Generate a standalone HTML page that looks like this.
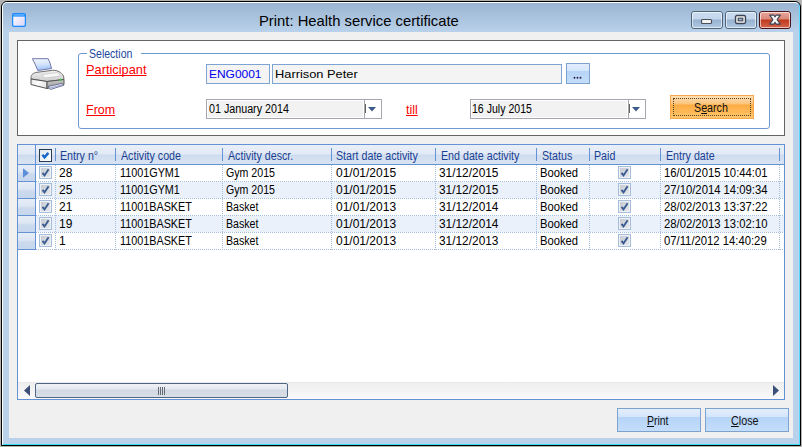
<!DOCTYPE html>
<html><head><meta charset="utf-8">
<style>
*{margin:0;padding:0;box-sizing:border-box}
html,body{width:802px;height:447px;overflow:hidden;background:#b2b2b2;font-family:"Liberation Sans",sans-serif}
.a{position:absolute}
.t{position:absolute;white-space:nowrap;line-height:14px}
#win{left:1px;top:1px;width:800px;height:445px;border:1px solid #000;border-radius:6px 6px 0 0;background:linear-gradient(#99b4d1 0px,#b9d1ea 30px,#b9d1ea);overflow:hidden}
#hl{left:0;top:0;width:798px;height:443px;border-top:1px solid #fff;border-left:1px solid #fff;border-right:1px solid #55dcff;border-bottom:1px solid #38def2;border-radius:5px 5px 0 0}
#client{left:9px;top:32px;width:784px;height:406px;background:#f0f0f0}
#title{left:259px;top:13px;font-size:14.8px;line-height:16px;color:#000}
.tb{top:11px;width:32px;height:18px;border:1px solid #4f6479;border-radius:3px;background:linear-gradient(#c8dbef 0,#c3d6ec 7px,#97b2d0 8px,#b3cbe5 17px)}
.tb::after{content:"";position:absolute;left:0;top:0;right:0;bottom:0;border:1px solid rgba(255,255,255,.6);border-radius:2px}
#tclose{background:linear-gradient(#e8a599 0,#d98a7a 7px,#c0391e 8px,#d56c52 17px);border-color:#4a1418}
#panel{left:17px;top:40px;width:768px;height:96px;border:1px solid #646464;background:#fff}
#grp{left:78px;top:53px;width:692px;height:76px;border:1px solid #6f99d3;border-radius:3px}
#grplbl{left:87px;top:46px;width:54px;height:12px;background:#fff}
.lnk{color:#f00;text-decoration:underline;text-decoration-skip-ink:none;font-size:12.5px}
u{text-decoration-skip-ink:none}
.tx{border:1px solid #7ea4d3;background:#f4f4f4}
.cb{border:1px solid #a6a6ae;background:#f2f2f2;box-shadow:inset 0 0 0 1px #fff}
.btn{border:1px solid #7da2ce;background:linear-gradient(#e4eefc 0,#d4e5fb 37%,#b6d4f8 38%,#c4ddfa 100%)}
#grid{left:17px;top:144px;width:768px;height:256px;border:1px solid #6592d4;background:#fff}
.hdr{background:linear-gradient(#e9eff8 0,#e2eaf6 9px,#cfdcef 10px,#d9e4f2 19px)}
.rh{background:linear-gradient(#e6edf7 0,#dde6f3 7px,#cbdaee 9px,#c6d6ed 16px)}
.dh{background-image:linear-gradient(90deg,#a3bde0 50%,transparent 50%);background-size:2px 1px}
.dv{background-image:linear-gradient(#a3bde0 50%,transparent 50%);background-size:1px 2px}
.ht{font-size:12px;color:#1b3f92;transform:scaleX(0.89);transform-origin:0 0}
.dt{font-size:11px;color:#000}
.hcb{width:13px;height:13px;border:1px solid #2b3b4f;background:linear-gradient(135deg,#dfe6ef,#fff)}
.hcb svg,.rcb svg{position:absolute;left:-1px;top:-1px}
.rcb{width:13px;height:13px;border:1px solid #a6bddc;background:linear-gradient(135deg,#c2c8d0,#e8ebef);box-shadow:inset 0 0 0 1px #eef2f7}
.sb{background:linear-gradient(#efefef,#f9f9f9);border-top:1px solid #e8e8e8}
.thumb{border:1px solid #4f6585;border-radius:2px;background:linear-gradient(#eef1f5 0,#e6eaf0 5px,#d2d9e2 6px,#d8dee6 13px)}

</style></head><body>
<div id="win" class="a">
  <div id="hl" class="a"></div>
</div>
<div id="client" class="a"></div>
<div id="title" class="t">Print: Health service certificate</div>
<svg class="a" style="left:12px;top:13px" width="14" height="14" viewBox="0 0 14 14">
<defs><linearGradient id="ig" x1="0" y1="0" x2="1" y2="1"><stop offset="0" stop-color="#ffffff"/><stop offset="1" stop-color="#d8d4f8"/></linearGradient></defs>
<rect x="0.6" y="0.6" width="12.8" height="12.8" rx="1.6" fill="url(#ig)" stroke="#1a8bff" stroke-width="1.25"/>
<rect x="1" y="1" width="12" height="2.6" fill="#1a8bff"/>
<rect x="1.6" y="1.5" width="10.8" height="0.9" fill="#9fd0ff"/>
</svg>
<div class="a tb" style="left:691px"></div>
<div class="a tb" style="left:725px"></div>
<div class="a tb" id="tclose" style="left:759px"></div>
<svg class="a" style="left:700px;top:18px" width="13" height="7" viewBox="0 0 13 7"><rect x="1.5" y="1.5" width="10" height="4" rx="1" fill="#f4f4f0" stroke="#4a505e" stroke-width="1.2"/></svg>
<svg class="a" style="left:734px;top:14px" width="13" height="11" viewBox="0 0 13 11"><rect x="1.5" y="1.5" width="10" height="8" rx="1.4" fill="#f4f4f0" stroke="#3f4658" stroke-width="1.4"/><rect x="4.2" y="4.2" width="4.6" height="2.6" fill="#9fb6d2" stroke="#3f4658" stroke-width="1.1"/></svg>
<svg class="a" style="left:768px;top:14px" width="14" height="12" viewBox="0 0 14 12"><path d="M1.7 1.1 L5.9 1.1 L7 2.9 L8.1 1.1 L12.3 1.1 L9.1 5.6 L12.3 10.1 L8.1 10.1 L7 8.3 L5.9 10.1 L1.7 10.1 L4.9 5.6 Z" fill="#f7f7f5" stroke="#3c4152" stroke-width="1.05" stroke-linejoin="round"/></svg>

<div id="panel" class="a"></div>
<svg class="a" style="left:29px;top:56px" width="38" height="36" viewBox="0 0 38 36">
<defs>
<linearGradient id="pg" x1="0" y1="0" x2="0.2" y2="1"><stop offset="0" stop-color="#f6f9ff"/><stop offset="0.6" stop-color="#d2e2fb"/><stop offset="1" stop-color="#9fc0f4"/></linearGradient>
<linearGradient id="bg1" x1="0" y1="0" x2="0" y2="1"><stop offset="0" stop-color="#f0f0f0"/><stop offset="1" stop-color="#cdcdcd"/></linearGradient>
<linearGradient id="bg2" x1="0" y1="0" x2="1" y2="0.3"><stop offset="0" stop-color="#e4e4e4"/><stop offset="0.5" stop-color="#fdfdfd"/><stop offset="1" stop-color="#e8e8e8"/></linearGradient>
<linearGradient id="bg3" x1="0" y1="0" x2="0" y2="1"><stop offset="0" stop-color="#c8c8c8"/><stop offset="1" stop-color="#9c9c9c"/></linearGradient>
</defs>
<path d="M3.4 2.7 L19.2 2.7 Q21.2 6.5 22.6 12.5 L8.8 14.5 Q6 7.5 3.4 2.7 Z" fill="url(#pg)" stroke="#6c72a8" stroke-width="0.95"/>
<path d="M2 21.5 C2 18.5 4.5 16.8 8 16.3 L23.5 14.3 C28.5 14 32.5 16.5 34.5 20 L35 23.5 L18 25.5 L2 23 Z" fill="url(#bg1)" stroke="#6e6e6e" stroke-width="1"/>
<path d="M13 18.5 L29 16.5 L31.5 20 L15.5 22 Z" fill="#f8f8f8" stroke="#c0c0c0" stroke-width="0.6"/>
<path d="M2 23 L18 25.5 L18 32.5 L2 28.5 Z" fill="url(#bg2)" stroke="#555" stroke-width="1"/>
<path d="M18 25.5 L35 23.5 L35 28.5 L18 32.5 Z" fill="url(#bg3)" stroke="#555" stroke-width="1"/>
<path d="M19 30.5 L33 27.3 L34.5 29.3 L21.5 33.5 Z" fill="#f2f3f8" stroke="#4f5676" stroke-width="0.8"/>
<path d="M20 32.3 L33.5 28.8" stroke="#8088c8" stroke-width="0.8"/>
<rect x="30.6" y="22.8" width="2" height="2" fill="#3fc83f"/>
</svg>
<div id="grp" class="a"></div>
<div id="grplbl" class="a"></div>
<div class="t" style="left:89px;top:46.6px;font-size:12.2px;color:#22479e;transform:scaleX(0.865);transform-origin:0 0">Selection</div>
<div class="t lnk" style="left:86px;top:63px;font-size:12.8px">Participant</div>
<div class="t lnk" style="left:86px;top:103px">From</div>
<div class="t lnk" style="left:406px;top:103px">till</div>

<div class="a tx" style="left:206px;top:64px;width:64px;height:20px"></div>
<div class="t" style="left:209px;top:67px;font-size:11.5px;color:#0000f0;transform:scaleX(1.04);transform-origin:0 0">ENG0001</div>
<div class="a tx" style="left:272px;top:64px;width:290px;height:20px"></div>
<div class="t" style="left:275px;top:67px;font-size:11.5px;color:#000;transform:scaleX(1.115);transform-origin:0 0">Harrison Peter</div>
<div class="a btn" style="left:566px;top:63px;width:24px;height:21px"></div>
<svg class="a" style="left:572px;top:75px" width="12" height="6"><circle cx="2.5" cy="2.7" r="0.95" fill="#2a1e40"/><circle cx="5.5" cy="2.7" r="0.95" fill="#2a1e40"/><circle cx="8.5" cy="2.7" r="0.95" fill="#2a1e40"/></svg>

<div class="a cb" style="left:206px;top:99px;width:176px;height:20px"></div>
<div class="a" style="left:363px;top:100px;width:18px;height:18px;background:#fff;border-left:1px solid #fff"><div class="a" style="left:0;top:0;width:1px;height:18px;background:#a6a6ae"></div></div>
<div class="a" style="left:365px;top:104px;width:1px;height:9px;background:#6a625c"></div>
<svg class="a" style="left:368px;top:107px" width="8" height="5" viewBox="0 0 8 5"><path d="M0 0 L8 0 L4 4.5Z" fill="#3c5a8a"/></svg>
<div class="t dt" style="left:209px;top:102px;font-size:12px;transform:scaleX(0.893);transform-origin:0 0">01 January 2014</div>

<div class="a cb" style="left:470px;top:99px;width:176px;height:20px"></div>
<div class="a" style="left:627px;top:100px;width:18px;height:18px;background:#fff;border-left:1px solid #fff"><div class="a" style="left:0;top:0;width:1px;height:18px;background:#a6a6ae"></div></div>
<div class="a" style="left:629px;top:104px;width:1px;height:9px;background:#6a625c"></div>
<svg class="a" style="left:632px;top:107px" width="8" height="5" viewBox="0 0 8 5"><path d="M0 0 L8 0 L4 4.5Z" fill="#3c5a8a"/></svg>
<div class="t dt" style="left:472px;top:102px;font-size:12px;transform:scaleX(0.88);transform-origin:0 0">16 July 2015</div>

<div class="a" style="left:670px;top:95px;width:84px;height:24px;border:1px solid #f6a94c;background:linear-gradient(#fde0b4 0,#fbc37c 8px,#fdab42 9px,#ffc66c 22px)"></div>
<div class="a" style="left:673px;top:98px;width:78px;height:18px;border:1px dotted #56462c"></div>
<div class="t" style="left:694px;top:101px;font-size:12px;color:#101010;transform:scaleX(0.89);transform-origin:0 0">S<u>e</u>arch</div>

<div id="grid" class="a"></div>

<div class="a btn" style="left:617px;top:408px;width:84px;height:24px"></div>
<div class="t" style="left:647px;top:414px;font-size:12px;color:#101010;transform:scaleX(0.87);transform-origin:0 0"><u>P</u>rint</div>
<div class="a btn" style="left:705px;top:408px;width:84px;height:24px"></div>
<div class="t" style="left:731px;top:414px;font-size:12px;color:#101010;transform:scaleX(0.9);transform-origin:0 0"><u>C</u>lose</div>

<div class="a hdr" style="left:18px;top:145px;width:766px;height:19px"></div>
<div class="a" style="left:18px;top:164px;width:766px;height:1px;background:#6592d4"></div>
<div class="a rh" style="left:18px;top:165px;width:17px;height:16px"></div>
<div class="a" style="left:18px;top:181px;width:18px;height:1px;background:#6592d4"></div>
<div class="a rh" style="left:18px;top:182px;width:17px;height:16px"></div>
<div class="a" style="left:18px;top:198px;width:18px;height:1px;background:#6592d4"></div>
<div class="a rh" style="left:18px;top:199px;width:17px;height:16px"></div>
<div class="a" style="left:18px;top:215px;width:18px;height:1px;background:#6592d4"></div>
<div class="a rh" style="left:18px;top:216px;width:17px;height:16px"></div>
<div class="a" style="left:18px;top:232px;width:18px;height:1px;background:#6592d4"></div>
<div class="a rh" style="left:18px;top:233px;width:17px;height:16px"></div>
<div class="a" style="left:18px;top:249px;width:18px;height:1px;background:#6592d4"></div>
<div class="a" style="left:35px;top:145px;width:1px;height:105px;background:#6592d4"></div>
<div class="a" style="left:36px;top:165px;width:748px;height:16px;background:#fff"></div>
<div class="a dh" style="left:36px;top:181px;width:748px;height:1px"></div>
<div class="a" style="left:36px;top:182px;width:748px;height:16px;background:#eaf1fb"></div>
<div class="a dh" style="left:36px;top:198px;width:748px;height:1px"></div>
<div class="a" style="left:36px;top:199px;width:748px;height:16px;background:#fff"></div>
<div class="a dh" style="left:36px;top:215px;width:748px;height:1px"></div>
<div class="a" style="left:36px;top:216px;width:748px;height:16px;background:#eaf1fb"></div>
<div class="a dh" style="left:36px;top:232px;width:748px;height:1px"></div>
<div class="a" style="left:36px;top:233px;width:748px;height:16px;background:#fff"></div>
<div class="a dh" style="left:36px;top:249px;width:748px;height:1px"></div>
<div class="a dv" style="left:55px;top:165px;width:1px;height:85px"></div>
<div class="a dv" style="left:115px;top:165px;width:1px;height:85px"></div>
<div class="a dv" style="left:222px;top:165px;width:1px;height:85px"></div>
<div class="a dv" style="left:331px;top:165px;width:1px;height:85px"></div>
<div class="a dv" style="left:435px;top:165px;width:1px;height:85px"></div>
<div class="a dv" style="left:536px;top:165px;width:1px;height:85px"></div>
<div class="a dv" style="left:589px;top:165px;width:1px;height:85px"></div>
<div class="a dv" style="left:660px;top:165px;width:1px;height:85px"></div>
<div class="a dv" style="left:779px;top:165px;width:1px;height:85px"></div>
<div class="a" style="left:55px;top:148px;width:1px;height:13px;background:#6592d4"></div>
<div class="a" style="left:115px;top:148px;width:1px;height:13px;background:#6592d4"></div>
<div class="a" style="left:222px;top:148px;width:1px;height:13px;background:#6592d4"></div>
<div class="a" style="left:331px;top:148px;width:1px;height:13px;background:#6592d4"></div>
<div class="a" style="left:435px;top:148px;width:1px;height:13px;background:#6592d4"></div>
<div class="a" style="left:536px;top:148px;width:1px;height:13px;background:#6592d4"></div>
<div class="a" style="left:589px;top:148px;width:1px;height:13px;background:#6592d4"></div>
<div class="a" style="left:660px;top:148px;width:1px;height:13px;background:#6592d4"></div>
<div class="a" style="left:779px;top:148px;width:1px;height:13px;background:#6592d4"></div>
<div class="t ht" style="left:60px;top:149px">Entry n°</div>
<div class="t ht" style="left:121px;top:149px">Activity code</div>
<div class="t ht" style="left:228px;top:149px">Activity descr.</div>
<div class="t ht" style="left:336px;top:149px">Start date activity</div>
<div class="t ht" style="left:441px;top:149px">End date activity</div>
<div class="t ht" style="left:542px;top:149px">Status</div>
<div class="t ht" style="left:594px;top:149px">Paid</div>
<div class="t ht" style="left:666px;top:149px">Entry date</div>
<div class="a hcb" style="left:39px;top:149px"><svg width="13" height="13" viewBox="0 0 13 13"><path d="M3.4 5.8 L5.5 8.3 L9.4 3.9" stroke="#1565c8" stroke-width="2.4" fill="none"/></svg></div>
<svg class="a" style="left:22px;top:168px" width="8" height="11" viewBox="0 0 8 11"><path d="M1 0.2 L7 5 L1 9.8Z" fill="#5a8fd9"/></svg>
<div class="a rcb" style="left:39px;top:166px"><svg width="13" height="13" viewBox="0 0 13 13"><path d="M3.5 6.8 L5.5 9.4 L9.6 3.2" stroke="#3b5c92" stroke-width="1.9" fill="none"/></svg></div>
<div class="a rcb" style="left:618px;top:166px"><svg width="13" height="13" viewBox="0 0 13 13"><path d="M3.5 6.8 L5.5 9.4 L9.6 3.2" stroke="#3b5c92" stroke-width="1.9" fill="none"/></svg></div>
<div class="t dt" style="left:59px;top:166px;font-size:12px;transform:scaleX(1.0);transform-origin:0 0">28</div>
<div class="t dt" style="left:120px;top:166px;font-size:12px;transform:scaleX(0.9);transform-origin:0 0">11001GYM1</div>
<div class="t dt" style="left:226px;top:166px;font-size:12px;transform:scaleX(0.885);transform-origin:0 0">Gym 2015</div>
<div class="t dt" style="left:336px;top:166px;font-size:12px;transform:scaleX(1.0);transform-origin:0 0">01/01/2015</div>
<div class="t dt" style="left:439px;top:166px;font-size:12px;transform:scaleX(0.99);transform-origin:0 0">31/12/2015</div>
<div class="t dt" style="left:540px;top:166px;font-size:12px;transform:scaleX(0.935);transform-origin:0 0">Booked</div>
<div class="t dt" style="left:664px;top:166px;font-size:12px;transform:scaleX(0.94);transform-origin:0 0">16/01/2015 10:44:01</div>
<div class="a rcb" style="left:39px;top:183px"><svg width="13" height="13" viewBox="0 0 13 13"><path d="M3.5 6.8 L5.5 9.4 L9.6 3.2" stroke="#3b5c92" stroke-width="1.9" fill="none"/></svg></div>
<div class="a rcb" style="left:618px;top:183px"><svg width="13" height="13" viewBox="0 0 13 13"><path d="M3.5 6.8 L5.5 9.4 L9.6 3.2" stroke="#3b5c92" stroke-width="1.9" fill="none"/></svg></div>
<div class="t dt" style="left:59px;top:183px;font-size:12px;transform:scaleX(1.0);transform-origin:0 0">25</div>
<div class="t dt" style="left:120px;top:183px;font-size:12px;transform:scaleX(0.9);transform-origin:0 0">11001GYM1</div>
<div class="t dt" style="left:226px;top:183px;font-size:12px;transform:scaleX(0.885);transform-origin:0 0">Gym 2015</div>
<div class="t dt" style="left:336px;top:183px;font-size:12px;transform:scaleX(1.0);transform-origin:0 0">01/01/2015</div>
<div class="t dt" style="left:439px;top:183px;font-size:12px;transform:scaleX(0.99);transform-origin:0 0">31/12/2015</div>
<div class="t dt" style="left:540px;top:183px;font-size:12px;transform:scaleX(0.935);transform-origin:0 0">Booked</div>
<div class="t dt" style="left:664px;top:183px;font-size:12px;transform:scaleX(0.94);transform-origin:0 0">27/10/2014 14:09:34</div>
<div class="a rcb" style="left:39px;top:200px"><svg width="13" height="13" viewBox="0 0 13 13"><path d="M3.5 6.8 L5.5 9.4 L9.6 3.2" stroke="#3b5c92" stroke-width="1.9" fill="none"/></svg></div>
<div class="a rcb" style="left:618px;top:200px"><svg width="13" height="13" viewBox="0 0 13 13"><path d="M3.5 6.8 L5.5 9.4 L9.6 3.2" stroke="#3b5c92" stroke-width="1.9" fill="none"/></svg></div>
<div class="t dt" style="left:59px;top:200px;font-size:12px;transform:scaleX(1.0);transform-origin:0 0">21</div>
<div class="t dt" style="left:120px;top:200px;font-size:12px;transform:scaleX(0.9);transform-origin:0 0">11001BASKET</div>
<div class="t dt" style="left:226px;top:200px;font-size:12px;transform:scaleX(0.885);transform-origin:0 0">Basket</div>
<div class="t dt" style="left:336px;top:200px;font-size:12px;transform:scaleX(1.0);transform-origin:0 0">01/01/2013</div>
<div class="t dt" style="left:439px;top:200px;font-size:12px;transform:scaleX(0.99);transform-origin:0 0">31/12/2014</div>
<div class="t dt" style="left:540px;top:200px;font-size:12px;transform:scaleX(0.935);transform-origin:0 0">Booked</div>
<div class="t dt" style="left:664px;top:200px;font-size:12px;transform:scaleX(0.94);transform-origin:0 0">28/02/2013 13:37:22</div>
<div class="a rcb" style="left:39px;top:217px"><svg width="13" height="13" viewBox="0 0 13 13"><path d="M3.5 6.8 L5.5 9.4 L9.6 3.2" stroke="#3b5c92" stroke-width="1.9" fill="none"/></svg></div>
<div class="a rcb" style="left:618px;top:217px"><svg width="13" height="13" viewBox="0 0 13 13"><path d="M3.5 6.8 L5.5 9.4 L9.6 3.2" stroke="#3b5c92" stroke-width="1.9" fill="none"/></svg></div>
<div class="t dt" style="left:59px;top:217px;font-size:12px;transform:scaleX(1.0);transform-origin:0 0">19</div>
<div class="t dt" style="left:120px;top:217px;font-size:12px;transform:scaleX(0.9);transform-origin:0 0">11001BASKET</div>
<div class="t dt" style="left:226px;top:217px;font-size:12px;transform:scaleX(0.885);transform-origin:0 0">Basket</div>
<div class="t dt" style="left:336px;top:217px;font-size:12px;transform:scaleX(1.0);transform-origin:0 0">01/01/2013</div>
<div class="t dt" style="left:439px;top:217px;font-size:12px;transform:scaleX(0.99);transform-origin:0 0">31/12/2014</div>
<div class="t dt" style="left:540px;top:217px;font-size:12px;transform:scaleX(0.935);transform-origin:0 0">Booked</div>
<div class="t dt" style="left:664px;top:217px;font-size:12px;transform:scaleX(0.94);transform-origin:0 0">28/02/2013 13:02:10</div>
<div class="a rcb" style="left:39px;top:234px"><svg width="13" height="13" viewBox="0 0 13 13"><path d="M3.5 6.8 L5.5 9.4 L9.6 3.2" stroke="#3b5c92" stroke-width="1.9" fill="none"/></svg></div>
<div class="a rcb" style="left:618px;top:234px"><svg width="13" height="13" viewBox="0 0 13 13"><path d="M3.5 6.8 L5.5 9.4 L9.6 3.2" stroke="#3b5c92" stroke-width="1.9" fill="none"/></svg></div>
<div class="t dt" style="left:59px;top:234px;font-size:12px;transform:scaleX(1.0);transform-origin:0 0">1</div>
<div class="t dt" style="left:120px;top:234px;font-size:12px;transform:scaleX(0.9);transform-origin:0 0">11001BASKET</div>
<div class="t dt" style="left:226px;top:234px;font-size:12px;transform:scaleX(0.885);transform-origin:0 0">Basket</div>
<div class="t dt" style="left:336px;top:234px;font-size:12px;transform:scaleX(1.0);transform-origin:0 0">01/01/2013</div>
<div class="t dt" style="left:439px;top:234px;font-size:12px;transform:scaleX(0.99);transform-origin:0 0">31/12/2013</div>
<div class="t dt" style="left:540px;top:234px;font-size:12px;transform:scaleX(0.935);transform-origin:0 0">Booked</div>
<div class="t dt" style="left:664px;top:234px;font-size:12px;transform:scaleX(0.94);transform-origin:0 0">07/11/2012 14:40:29</div>
<div class="a sb" style="left:18px;top:382px;width:766px;height:17px"></div>
<svg class="a" style="left:24px;top:385px" width="6" height="11" viewBox="0 0 6 11"><path d="M6 0 L0 5.5 L6 11Z" fill="#3c4f78"/></svg>
<svg class="a" style="left:773px;top:385px" width="6" height="11" viewBox="0 0 6 11"><path d="M0 0 L6 5.5 L0 11Z" fill="#3c4f78"/></svg>
<div class="a thumb" style="left:35px;top:383px;width:253px;height:15px"></div>
<svg class="a" style="left:158px;top:387px" width="9" height="8"><path d="M0.5 0V8M2.5 0V8M4.5 0V8M6.5 0V8" stroke="#666a72" stroke-width="1"/></svg>
</body></html>
